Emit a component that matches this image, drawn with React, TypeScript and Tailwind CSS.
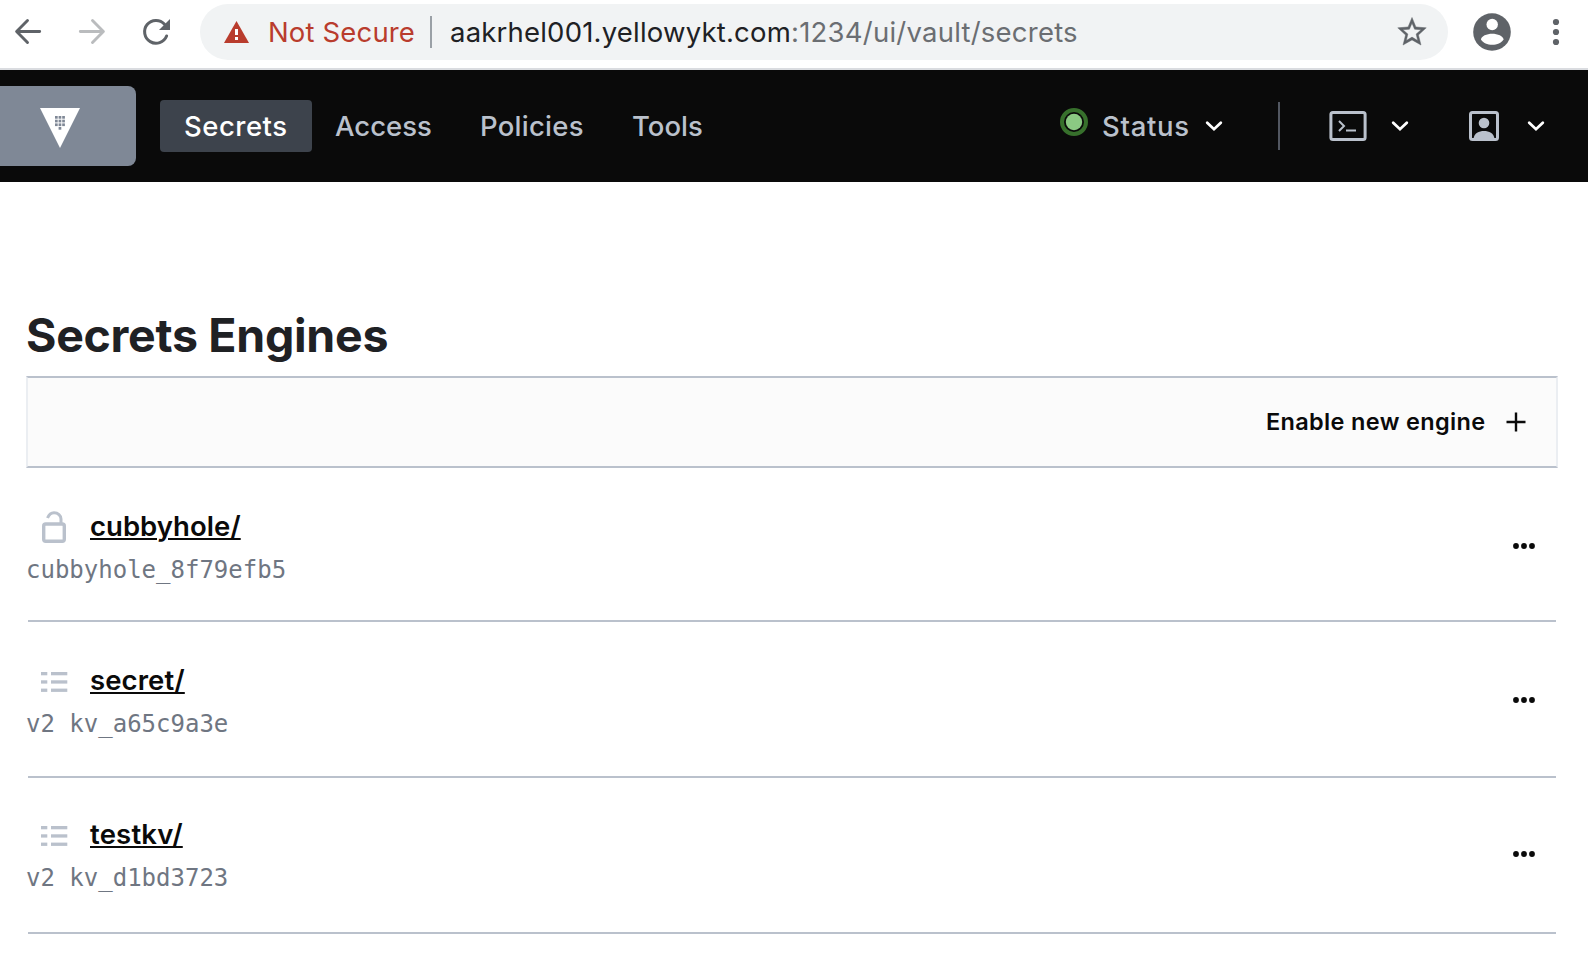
import React from "react";

const Chevron = ({ className = "" }: { className?: string }) => (
  <svg className={`shrink-0 ${className}`} width="20" height="20" viewBox="0 0 20 20" fill="none">
    <path d="M3.2 6.8L10 13.2L16.8 6.8" stroke="#fff" strokeWidth="2.8" strokeLinecap="round" />
  </svg>
);

const Arrow = ({ color, flip }: { color: string; flip?: boolean }) => (
  <svg className={flip ? "-scale-x-100 shrink-0" : "shrink-0"} width="28" height="28" viewBox="0 0 28 28" fill="none">
    <path d="M25.7 13.5H3M13.5 2.5L2.6 13.5L13.5 24.5" stroke={color} strokeWidth="2.9" strokeLinecap="round" strokeLinejoin="round" />
  </svg>
);

const UnlockIcon = () => (
  <svg width="24" height="32" viewBox="0 0 24 32" fill="none">
    <rect x="1.7" y="13" width="20.6" height="17.3" rx="2" stroke="#bac1cc" strokeWidth="3.4" />
    <path d="M5.5 7C7 3.5 9 1.8 12 1.8C16 1.8 19 4.5 19 8V12" stroke="#bac1cc" strokeWidth="3" />
  </svg>
);

const ListIcon = () => (
  <svg width="28" height="20" viewBox="0 0 28 20" fill="#bac1cc">
    {[0, 8.3, 16.6].map((y) => (
      <g key={y}>
        <rect x="1" y={y} width="6.3" height="3.3" />
        <rect x="11" y={y} width="16.3" height="3.3" />
      </g>
    ))}
  </svg>
);

const nav = [
  { label: "Access", cls: "w-[145px]" },
  { label: "Policies", cls: "w-[152px] tracking-[0.25px]" },
  { label: "Tools", cls: "w-[120px]" },
];

const engines = [
  { name: "cubbyhole/", accessor: "cubbyhole_8f79efb5", icon: "lock", cls: "h-[154px] pt-[39px]", tracking: "tracking-[0.03px]" },
  { name: "secret/", accessor: "v2 kv_a65c9a3e", icon: "list", cls: "h-[156px] pt-[39px]", tracking: "tracking-[0.1px]" },
  { name: "testkv/", accessor: "v2 kv_d1bd3723", icon: "list", cls: "h-[156px] pt-[37px]", tracking: "tracking-[0.2px]" },
];

export default function App() {
  return (
    <div className="h-[956px] w-[1588px] overflow-hidden bg-white font-['Inter',sans-serif] whitespace-nowrap">
      <header className="flex h-[70px] items-start border-b-2 border-[#dadce0] pt-1">
        <div className="flex h-14 w-[200px] items-center pl-[14px]">
          <Arrow color="#5f6368" />
          <div className="ml-[36px] flex">
            <Arrow color="#babcbe" flip />
          </div>
          <svg className="ml-[36px] shrink-0" width="28" height="28" viewBox="0 0 28 28" fill="none">
            <path d="M24.6 18A11.4 11.4 0 1 1 22.5 6.2" stroke="#5f6368" strokeWidth="3" strokeLinecap="round" />
            <path d="M28 1V12H17Z" fill="#5f6368" />
          </svg>
        </div>
        <div className="flex h-14 w-[1248px] items-center rounded-full bg-[#f1f3f4] text-[27.5px]">
          <svg className="ml-6 shrink-0" width="26" height="22" viewBox="0 0 26 22">
            <path d="M12.5 0L25 22H0Z" fill="#b93c2d" />
            <path d="M11 8h3v6h-3zM11 16h3v3h-3z" fill="#fff" />
          </svg>
          <span className="ml-[18px] w-[162px] pt-0.5 tracking-[0.15px] text-[#b93c2d]">Not Secure</span>
          <span className="h-8 w-0.5 bg-[#9aa0a6]" />
          <span className="ml-[18px] w-[341px] pt-0.5 tracking-[0.2px] text-[#202124]">aakrhel001.yellowykt.com</span>
          <span className="pt-0.5 tracking-[0.23px] text-[#6b6e72]">:1234/ui/vault/secrets</span>
          <svg className="ml-auto mr-[18px] shrink-0" width="36" height="36" viewBox="0 0 24 24" fill="#5f6368" stroke="#5f6368" strokeWidth="0.3">
            <path d="M21.5 9.24l-6.9-.62L12 2.3 9.39 8.63 2.5 9.24l5.2 4.73L6 20.7 12 17.27 18 20.7l-1.7-6.73L21.5 9.24zM12 15.4l-3.76 2.27 1-4.28-3.32-2.88 4.38-.38L12 6.1l1.71 4.04 4.38.38-3.32 2.88 1 4.28L12 15.4z" />
          </svg>
        </div>
        <div className="flex h-14 flex-1 items-center">
          <svg className="ml-[25px] shrink-0" width="38" height="38" viewBox="0 0 38 38">
            <circle cx="19" cy="19" r="18.8" fill="#5f6368" />
            <circle cx="19.2" cy="11.5" r="5.7" fill="#fff" />
            <path d="M8 26.5C8 23 14 20.7 19.2 20.7S30.5 23 30.5 26.5C28.5 30 24 31.8 19.2 31.8S10 30 8 26.5Z" fill="#fff" />
          </svg>
          <svg className="ml-[41px]" width="8" height="28" viewBox="0 0 8 28" fill="#5f6368">
            <circle cx="4" cy="4" r="3.1" />
            <circle cx="4" cy="14" r="3.1" />
            <circle cx="4" cy="24" r="3.1" />
          </svg>
        </div>
      </header>

      <nav className="flex h-28 items-center bg-[#0a0a0a] text-[27.5px] font-medium text-[#bac1cc]">
        <div className="flex h-20 w-[136px] items-center rounded-r-lg bg-[#7f8896] pt-1 pl-10">
          <svg width="40" height="40" viewBox="0 0 40 40">
            <path d="M0 0H40L20 40Z" fill="#fff" />
            <g fill="#7f8896">
              {[8, 11.7, 15.4].map((y) => [15, 18.6, 22.2].map((x) => <rect key={`${x}-${y}`} x={x} y={y} width="2.7" height="2.7" />))}
              <rect x="18.6" y="19" width="2.7" height="2.7" />
            </g>
          </svg>
        </div>
        <div className="ml-6 flex h-[52px] w-[152px] items-center rounded bg-[#3d434c] pt-0.5 pl-6 tracking-[0.5px] text-white">Secrets</div>
        <div className="ml-[23px] flex pt-0.5">
          {nav.map((n) => (
            <span key={n.label} className={n.cls}>{n.label}</span>
          ))}
        </div>
        <div className="ml-auto flex items-center">
          <svg className="mb-2" width="28" height="28" viewBox="0 0 28 28">
            <circle cx="14" cy="14" r="12" fill="none" stroke="#37702c" strokeWidth="4" />
            <circle cx="14" cy="14" r="8.2" fill="#8bc983" />
          </svg>
          <span className="ml-[14px] w-[102px] pt-0.5 tracking-[0.7px]">Status</span>
          <Chevron />
          <span className="ml-[54px] h-12 w-0.5 bg-[#525761]" />
          <svg className="ml-[49px]" width="38" height="30" viewBox="0 0 38 30" fill="none" stroke="#bac1cc">
            <rect x="1.9" y="1.5" width="34.2" height="27" rx="2" strokeWidth="3" />
            <path d="M10 10L15 15L10 20M17 19.5H27" strokeWidth="2" />
          </svg>
          <Chevron className="ml-[23px]" />
          <svg className="ml-[59px]" width="30" height="30" viewBox="0 0 30 30" fill="none">
            <rect x="1.5" y="1.5" width="27" height="27" rx="2" stroke="#bac1cc" strokeWidth="3" />
            <circle cx="15" cy="12" r="5.3" fill="#bac1cc" />
            <path d="M4.5 28C5 22 10 20 15 20S25 22 25.5 28Z" fill="#bac1cc" />
          </svg>
          <Chevron className="ml-[27px] mr-[42px]" />
        </div>
      </nav>

      <main className="px-[26px] pt-[124px]">
        <h1 className="flex h-[60px] items-center text-[46.5px] font-bold tracking-[-0.3px] text-[#1f2124]">Secrets Engines</h1>
        <div className="mt-[10px] flex h-[92px] w-[1532px] items-center justify-end border-2 border-x-[#ebeef2] border-y-[#bac1cc] bg-[#fbfbfb] text-[23.5px] font-semibold text-[#0a0a0a]">
          <span className="w-[240px] tracking-[0.34px]">Enable new engine</span>
          <svg className="mr-[30px]" width="20" height="20" viewBox="0 0 20 20">
            <path d="M10 .5v19M.5 10h19" stroke="#0a0a0a" strokeWidth="2.4" />
          </svg>
        </div>
        {engines.map((e) => (
          <div key={e.name} className={`mx-0.5 flex w-[1528px] justify-between border-b-2 border-[#bac1cc] ${e.cls}`}>
            <div>
              <div className={`flex h-10 items-center text-[27.5px] font-semibold text-[#0a0a0a] ${e.tracking}`}>
                <span className="flex w-[62px]">
                  {e.icon === "lock" ? (
                    <span className="pl-[14px]"><UnlockIcon /></span>
                  ) : (
                    <span className="pt-0.5 pl-3"><ListIcon /></span>
                  )}
                </span>
                <a className="underline decoration-2 underline-offset-2">{e.name}</a>
              </div>
              <div className="mt-[3px] -ml-0.5 flex h-10 items-center font-['DejaVu_Sans_Mono',monospace] text-[24px] text-[#6f7682]">{e.accessor}</div>
            </div>
            <svg className="mt-[35px] mr-[20px]" width="24" height="8" viewBox="0 0 24 8" fill="#0a0a0a">
              <circle cx="4" cy="4" r="2.9" />
              <circle cx="12" cy="4" r="2.9" />
              <circle cx="20" cy="4" r="2.9" />
            </svg>
          </div>
        ))}
      </main>
    </div>
  );
}
